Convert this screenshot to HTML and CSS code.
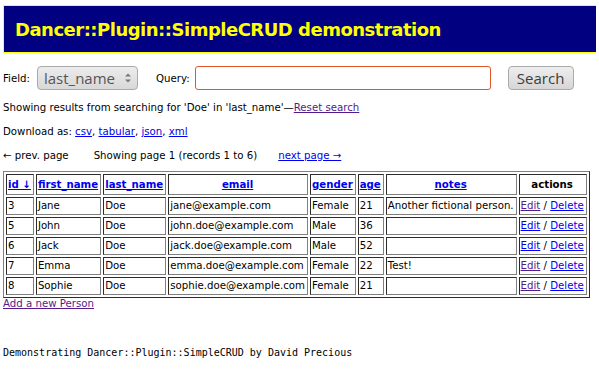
FILE: index.html
```html
<!DOCTYPE html>
<html lang="en">
<head>
    <meta charset="UTF-8">
    <title>Dancer::Plugin::SimpleCRUD demonstration</title>
    <link rel="stylesheet" href="styles.css">
</head>
<body>

    <!-- Page header -->
    <div class="header">
        <h1>Dancer::Plugin::SimpleCRUD demonstration</h1>
    </div>

    <!-- Search form -->
    <form class="search-form">
        <label>Field:</label>
        <div class="select-wrap">
            <select class="field-select">
                <option>last_name</option>
            </select>
            <svg class="select-arrows" width="8" height="12" viewBox="0 0 8 12">
                <path d="M1 4.5 L4 1.5 L7 4.5 Z M1 7.5 L4 10.5 L7 7.5 Z" fill="#777"/>
            </svg>
        </div>
        <label class="query-label">Query:</label>
        <input type="text" class="query-input">
        <button type="button" class="search-button">Search</button>
    </form>

    <p>Showing results from searching for 'Doe' in 'last_name'&mdash;<a href="#" class="visited">Reset search</a></p>

    <p class="downloads">Download as: <a href="#">csv</a>, <a href="#">tabular</a>, <a href="#">json</a>, <a href="#">xml</a></p>

    <div class="pager">
        <span>&larr; prev. page</span>
        <span>Showing page 1 (records 1 to 6)</span>
        <a href="#">next page &rarr;</a>
    </div>

    <table class="results" border="1">
        <tr>
            <th><a href="#">id &darr;</a></th>
            <th><a href="#">first_name</a></th>
            <th><a href="#">last_name</a></th>
            <th><a href="#">email</a></th>
            <th><a href="#">gender</a></th>
            <th><a href="#">age</a></th>
            <th><a href="#">notes</a></th>
            <th>actions</th>
        </tr>
        <tr>
            <td>3</td><td>Jane</td><td>Doe</td><td>jane@example.com</td><td>Female</td><td>21</td>
            <td>Another fictional person.</td>
            <td><a href="#" class="visited">Edit</a> / <a href="#">Delete</a></td>
        </tr>
        <tr>
            <td>5</td><td>John</td><td>Doe</td><td>john.doe@example.com</td><td>Male</td><td>36</td>
            <td></td>
            <td><a href="#">Edit</a> / <a href="#">Delete</a></td>
        </tr>
        <tr>
            <td>6</td><td>Jack</td><td>Doe</td><td>jack.doe@example.com</td><td>Male</td><td>52</td>
            <td></td>
            <td><a href="#">Edit</a> / <a href="#">Delete</a></td>
        </tr>
        <tr>
            <td>7</td><td>Emma</td><td>Doe</td><td>emma.doe@example.com</td><td>Female</td><td>22</td>
            <td>Test!</td>
            <td><a href="#" class="visited">Edit</a> / <a href="#">Delete</a></td>
        </tr>
        <tr>
            <td>8</td><td>Sophie</td><td>Doe</td><td>sophie.doe@example.com</td><td>Female</td><td>21</td>
            <td></td>
            <td><a href="#" class="visited">Edit</a> / <a href="#">Delete</a></td>
        </tr>
    </table>
    <a href="#" class="visited">Add a new Person</a>

    <div class="footer">
        Demonstrating Dancer::Plugin::SimpleCRUD by David Precious
    </div>

</body>
</html>
```

FILE: styles.css
```css
html {
    overflow: hidden;
}
body {
    margin: 3px;
    font-family: "DejaVu Sans", Verdana, sans-serif;
    font-size: 10.2px;
    color: #000;
    background: #fff;
}
a {
    color: #0000ee;
}
a.visited {
    color: #551a8b;
}
p {
    margin: 0 0 11px 0;
}
.header {
    background: #000080;
    border: 1px solid #ffff00;
    margin: 2px -10px 0 0;
    padding: 0 10px;
}
.header h1 {
    margin: 0;
    padding: 13px 0 11px 1px;
    color: #ffff00;
    font-size: 18px;
    letter-spacing: -0.5px;
    line-height: 22px;
    font-weight: bold;
}
.search-form {
    display: flex;
    align-items: center;
    margin: 13px 0 12px 0;
}
.search-form label {
    margin-right: 7px;
}
.search-form .query-label {
    margin-right: 5px;
}
.select-wrap {
    position: relative;
    margin-right: 18px;
}
.field-select {
    appearance: none;
    -webkit-appearance: none;
    width: 101px;
    height: 24px;
    padding: 0 0 0 6px;
    border: 1px solid #aaa;
    border-radius: 4px;
    background: linear-gradient(#ececec, #d8d8d8);
    color: #555;
    font-family: "Open Sans", sans-serif;
    font-size: 15px;
}
.select-arrows {
    position: absolute;
    right: 6px;
    top: 6px;
}
.query-input {
    width: 292px;
    height: 20px;
    padding: 1px;
    margin: 0;
    border: 1px solid #e0572a;
    border-radius: 3px;
    outline: none;
}
.search-button {
    margin-left: 17px;
    width: 66px;
    height: 24px;
    border: 1px solid #aaa;
    border-radius: 4px;
    background: linear-gradient(#eee, #d6d6d6);
    color: #3c3c3c;
    font-family: "Open Sans", sans-serif;
    font-size: 15px;
    padding: 0;
}
.downloads {
    margin-top: 13px;
}
.pager {
    display: flex;
    gap: 23px;
    margin: 13px 0 10px 0;
}
.pager span:first-child {
    margin-right: 2px;
}
.pager a {
    margin-left: -2px;
}
.results {
    border-collapse: separate;
    border-spacing: 2px;
    border: 1px outset #808080;
}
.results th,
.results td {
    border: 1px inset #808080;
    padding: 1px 2px 1px 1px;
    white-space: nowrap;
    line-height: 14px;
}
.results th {
    padding-top: 3px;
    padding-bottom: 2px;
}
.results td {
    text-align: left;
}
.footer {
    margin-top: 38px;
    font-family: "DejaVu Sans Mono", monospace;
    font-size: 10px;
}
```
